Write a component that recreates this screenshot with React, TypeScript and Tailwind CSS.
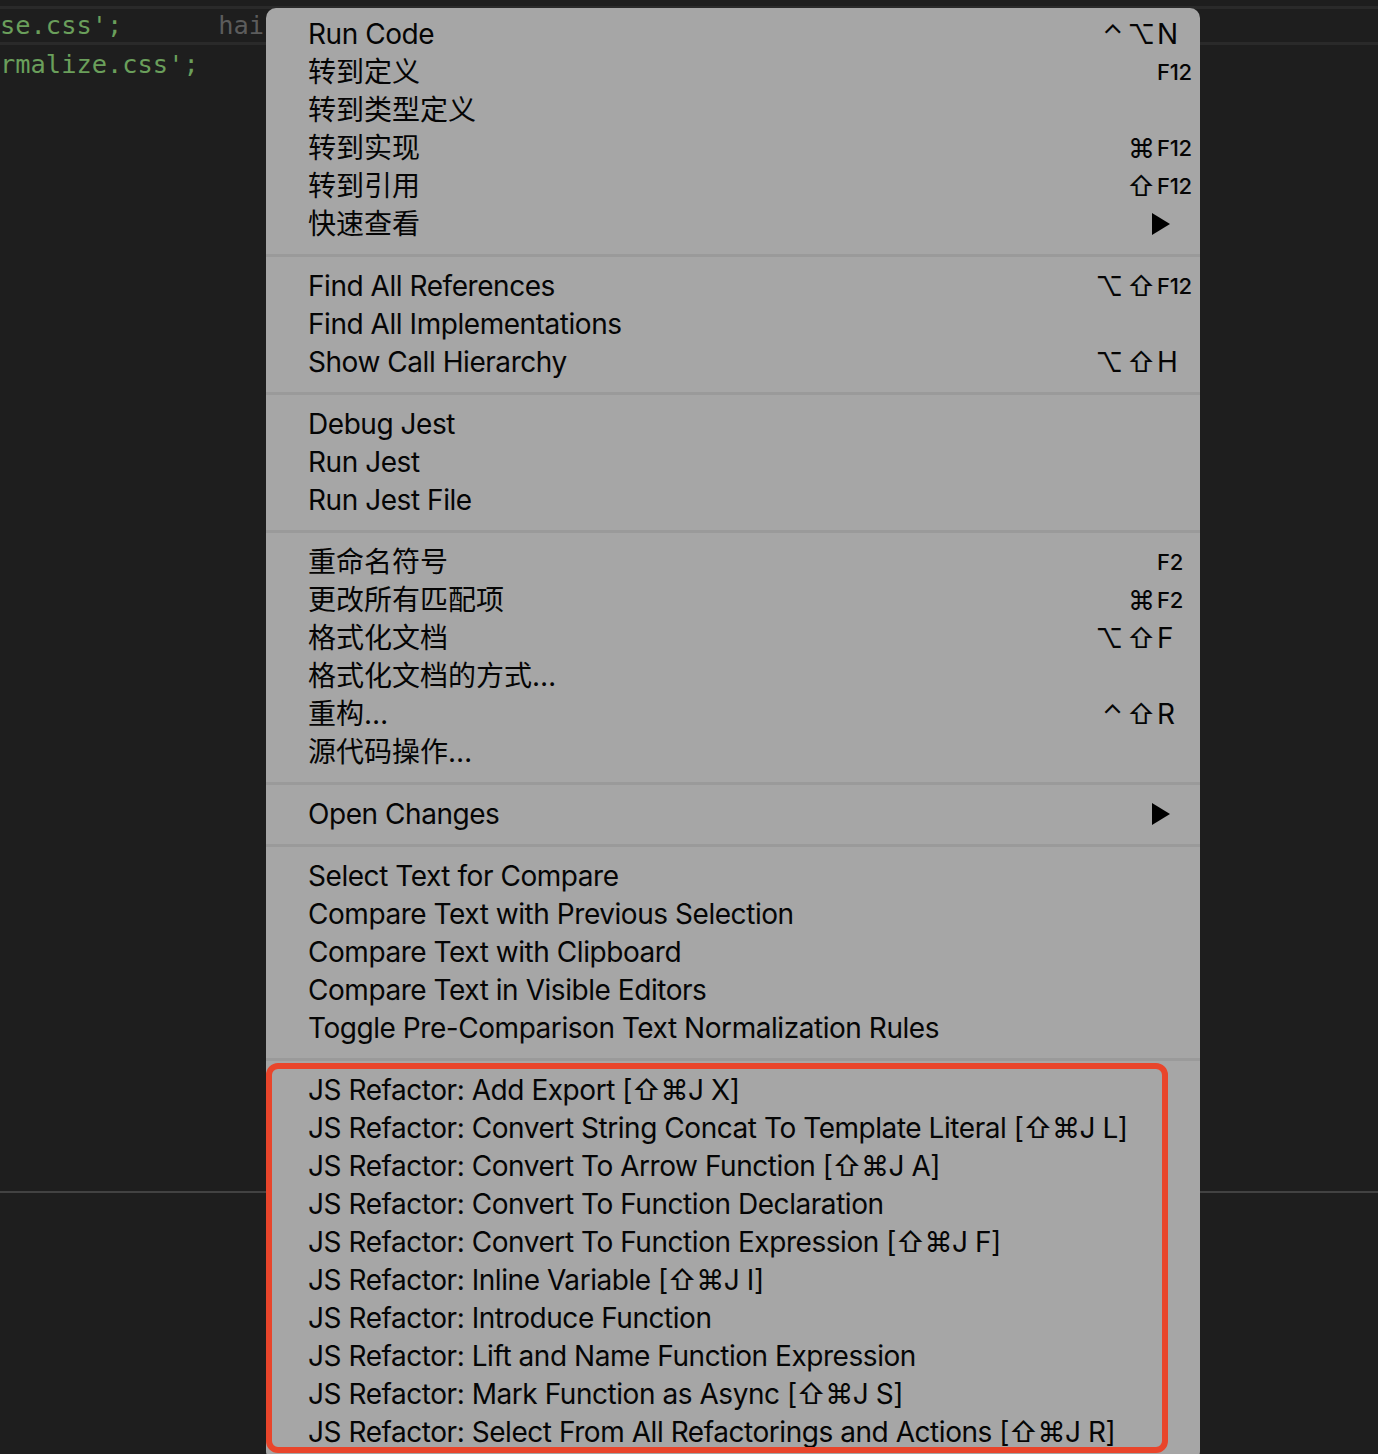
import React from "react";

type Item = {
  label: string;
  mods?: string;
  key?: string;
  sub?: boolean;
};

const groups: Item[][] = [
  [
    { label: "Run Code", mods: "⌃⌥", key: "N" },
    { label: "转到定义", key: "F12" },
    { label: "转到类型定义" },
    { label: "转到实现", mods: "⌘", key: "F12" },
    { label: "转到引用", mods: "⇧", key: "F12" },
    { label: "快速查看", sub: true },
  ],
  [
    { label: "Find All References", mods: "⌥⇧", key: "F12" },
    { label: "Find All Implementations" },
    { label: "Show Call Hierarchy", mods: "⌥⇧", key: "H" },
  ],
  [{ label: "Debug Jest" }, { label: "Run Jest" }, { label: "Run Jest File" }],
  [
    { label: "重命名符号", key: "F2" },
    { label: "更改所有匹配项", mods: "⌘", key: "F2" },
    { label: "格式化文档", mods: "⌥⇧", key: "F" },
    { label: "格式化文档的方式…" },
    { label: "重构…", mods: "⌃⇧", key: "R" },
    { label: "源代码操作…" },
  ],
  [{ label: "Open Changes", sub: true }],
  [
    { label: "Select Text for Compare" },
    { label: "Compare Text with Previous Selection" },
    { label: "Compare Text with Clipboard" },
    { label: "Compare Text in Visible Editors" },
    { label: "Toggle Pre-Comparison Text Normalization Rules" },
  ],
  [
    { label: "JS Refactor: Add Export [⇧⌘J X]" },
    { label: "JS Refactor: Convert String Concat To Template Literal [⇧⌘J L]" },
    { label: "JS Refactor: Convert To Arrow Function [⇧⌘J A]" },
    { label: "JS Refactor: Convert To Function Declaration" },
    { label: "JS Refactor: Convert To Function Expression [⇧⌘J F]" },
    { label: "JS Refactor: Inline Variable [⇧⌘J I]" },
    { label: "JS Refactor: Introduce Function" },
    { label: "JS Refactor: Lift and Name Function Expression" },
    { label: "JS Refactor: Mark Function as Async [⇧⌘J S]" },
    { label: "JS Refactor: Select From All Refactorings and Actions [⇧⌘J R]" },
  ],
];

function Row({ item }: { item: Item }) {
  const isFKey = item.key && item.key.length > 1;
  const isCjk = /[\u4e00-\u9fff]/.test(item.label);
  return (
    <div className="flex items-center h-[38px] pl-[42px] text-[#050505]">
      <span
        className={
          isCjk
            ? "flex-1 whitespace-nowrap text-[28px] leading-none font-['Inter','Noto_Sans_CJK_SC',sans-serif]"
            : "flex-1 whitespace-nowrap text-[28px] leading-none tracking-[-0.45px] font-['Inter','Noto_Sans_CJK_SC',sans-serif]"
        }
      >
        {item.label}
      </span>
      {item.mods && (
        <span className="mr-[2px] flex items-center gap-[4px] text-[27px] leading-none font-['Inter','DejaVu_Sans',sans-serif]">
          {item.mods.split("").map((m, i) => (
            <span key={i}>{m}</span>
          ))}
        </span>
      )}
      <span className="w-[43px] flex items-center">
        {item.key && (
          <span
            className={
              isFKey
                ? "text-[22px] leading-none font-medium tracking-[-0.3px] font-['Inter',sans-serif]"
                : "text-[28px] leading-none font-['Inter',sans-serif]"
            }
          >
            {item.key}
          </span>
        )}
        {item.sub && (
          <svg width="18" height="22" viewBox="0 0 18 22" className="-ml-[5px]">
            <polygon points="0,0 18,11 0,22" fill="#000" />
          </svg>
        )}
      </span>
    </div>
  );
}

export default function App() {
  return (
    <div className="relative w-full h-[1454px] overflow-hidden bg-[#1e1e1e] flex flex-col">
      {/* editor */}
      <div className="h-[1191px] pt-[6px] font-['DejaVu_Sans_Mono',monospace] text-[25.4px]">
        <div className="h-[39px] border-y-[3px] border-[#2a2a2a] flex items-center whitespace-nowrap">
          <span className="text-[#6a9f5b]">se.css';</span>
          <span className="ml-[96px] text-[#5c5c5c]">hai</span>
        </div>
        <div className="h-[38px] flex items-center whitespace-nowrap text-[#6a9f5b]">
          rmalize.css';
        </div>
      </div>
      {/* panel */}
      <div className="flex-1 border-t-2 border-[#424242]" />

      {/* context menu */}
      <div className="absolute left-[266px] top-[8px] w-[934px] bg-[#a6a6a6] rounded-[10px] pt-[7px] pb-[10px]">
        {groups.map((g, gi) => (
          <div key={gi}>
            {gi > 0 && <div className="mt-[11px] mb-[10px] h-[3px] bg-[#9a9a9a]" />}
            <div className="relative">
              {g.map((it, i) => (
                <Row key={i} item={it} />
              ))}
              {gi === groups.length - 1 && (
                <div className="pointer-events-none absolute left-0 -top-[8px] w-[902px] h-[390px] border-[6px] border-[#e9452b] rounded-[12px]" />
              )}
            </div>
          </div>
        ))}
      </div>
    </div>
  );
}
